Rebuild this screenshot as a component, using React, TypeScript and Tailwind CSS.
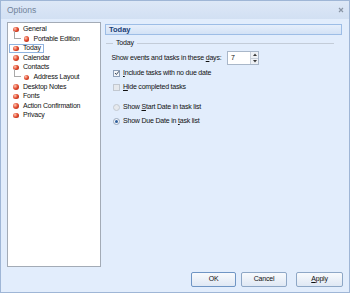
import React from "react";

const font = { fontFamily: '"Liberation Sans", Arial, sans-serif' } as React.CSSProperties;

function Bullet() {
  return (
    <span className="inline-block w-[5.5px] h-[5.5px] rounded-full bg-[radial-gradient(circle_at_35%_35%,#ffc8b4,#e0482c_50%,#a02614)] shrink-0" />
  );
}

type Item = { label: string; child?: boolean; selected?: boolean };
const items: Item[] = [
  { label: "General" },
  { label: "Portable Edition", child: true },
  { label: "Today", selected: true },
  { label: "Calendar" },
  { label: "Contacts" },
  { label: "Address Layout", child: true },
  { label: "Desktop Notes" },
  { label: "Fonts" },
  { label: "Action Confirmation" },
  { label: "Privacy" },
];

function TreeRow({ it }: { it: Item }) {
  if (it.child) {
    return (
      <div className="relative h-[9.6px] flex items-center pl-[15.5px]">
        <span className="absolute left-[6px] top-[-3px] w-[7px] h-[8px] border-l border-b border-[#a9a9a9]" />
        <Bullet />
        <span className="ml-[4.5px] whitespace-nowrap text-[#111]">{it.label}</span>
      </div>
    );
  }
  return (
    <div className="h-[9.6px] flex items-center pl-[1px]">
      <div
        className={
          "flex items-center h-[9.6px] pl-[3px] pr-[2px] border " +
          (it.selected ? "border-[#8fb3df] bg-white" : "border-transparent")
        }
      >
        <Bullet />
        <span className="ml-[4.5px] whitespace-nowrap text-[#111]">{it.label}</span>
      </div>
    </div>
  );
}

function Checkbox({ checked }: { checked?: boolean }) {
  return (
    <span
      className={
        "relative inline-flex w-[7px] h-[7px] border shrink-0 items-center justify-center " +
        (checked ? "border-[#8d9fb8] bg-[#f4f6f9]" : "border-[#c2c8d0] bg-[#e6e9ed]")
      }
    >
      {checked && (
        <svg width="6" height="6" viewBox="0 0 6 6" className="absolute">
          <path d="M1 3 L2.4 4.5 L5 1.2" fill="none" stroke="#3b4a5e" strokeWidth="1" />
        </svg>
      )}
    </span>
  );
}

function Radio({ checked }: { checked?: boolean }) {
  return (
    <span
      className={
        "relative inline-flex w-[7px] h-[7px] rounded-full border shrink-0 items-center justify-center " +
        (checked ? "border-[#9aa9bd] bg-[#f2f5f9]" : "border-[#c3c9d1] bg-[#e6e9ed]")
      }
    >
      {checked && <span className="w-[3px] h-[3px] rounded-full bg-[#2f5f9c]" />}
    </span>
  );
}

function Btn({ children, w, def }: { children: React.ReactNode; w: string; def?: boolean }) {
  return (
    <div
      className={
        "h-[15px] flex items-center justify-center rounded-[2px] border bg-gradient-to-b from-[#f8fafd] to-[#dfe8f4] text-[#111] " +
        w +
        (def ? " border-[#6f95c4]" : " border-[#8ea7c6]")
      }
    >
      {children}
    </div>
  );
}

export default function App() {
  return (
    <div
      style={font}
      className="w-[350px] h-[293px] flex flex-col border border-[#9fb6d6] bg-[#e2edfc] text-[7px] tracking-[-0.2px] text-[#111] overflow-hidden"
    >
      <div className="h-[18px] flex items-center justify-between pl-[6px] pr-[5px] bg-gradient-to-b from-[#dde8f7] to-[#d2e0f3]">
        <span className="text-[8.5px] tracking-normal text-[#72839a]">Options</span>
        <svg width="6" height="6" viewBox="0 0 6 6">
          <path d="M1 1 L5 5 M5 1 L1 5" stroke="#8a96a6" strokeWidth="1.2" />
        </svg>
      </div>

      <div className="mt-[3px] h-[245px] flex pl-[6px] pr-[7px]">
        <div className="w-[94px] h-full bg-white border border-[#a3abb6] pt-[1.5px]">
          {items.map((it) => (
            <TreeRow key={it.label} it={it} />
          ))}
        </div>

        <div className="flex-1 ml-[4px] flex flex-col">
          <div className="mt-[2px] h-[11px] flex items-center pl-[3px] border border-[#9dbde6] bg-gradient-to-b from-[#e6effb] to-[#d3e2f6]">
            <span className="text-[7.5px] font-bold tracking-normal text-[#1b3f78]">Today</span>
          </div>

          <div className="mt-[4px] h-[8px] flex items-center pr-[8px]">
            <span className="ml-[1px] w-[7px] h-px bg-[#c3ccd8]" />
            <span className="mx-[3px] text-[#111]">Today</span>
            <span className="flex-1 h-px bg-[#c3ccd8]" />
          </div>

          <div className="mt-[4px] h-[14px] flex items-center pl-[6.5px]">
            <span className="w-[115.5px] whitespace-nowrap">
              Show events and tasks in these <u>d</u>ays:
            </span>
            <div className="w-[32px] h-[14px] flex border border-[#a9b7c9] bg-white">
              <span className="flex-1 pl-[3px] flex items-center">7</span>
              <div className="w-[8px] flex flex-col border-l border-[#c7cfd9] bg-[#eef1f5]">
                <div className="flex-1 flex items-center justify-center border-b border-[#c7cfd9]">
                  <svg width="4" height="3" viewBox="0 0 4 3">
                    <path d="M0 3 L2 0.5 L4 3 Z" fill="#3a3a3a" />
                  </svg>
                </div>
                <div className="flex-1 flex items-center justify-center">
                  <svg width="4" height="3" viewBox="0 0 4 3">
                    <path d="M0 0 L2 2.5 L4 0 Z" fill="#3a3a3a" />
                  </svg>
                </div>
              </div>
            </div>
          </div>

          <div className="mt-[3px] h-[10px] flex items-center pl-[8px]">
            <Checkbox checked />
            <span className="ml-[3px] whitespace-nowrap">
              <u>I</u>nclude tasks with no due date
            </span>
          </div>

          <div className="mt-[4px] h-[10px] flex items-center pl-[8px]">
            <Checkbox />
            <span className="ml-[3px] whitespace-nowrap">
              <u>H</u>ide completed tasks
            </span>
          </div>

          <div className="mt-[10px] h-[10px] flex items-center pl-[8px]">
            <Radio />
            <span className="ml-[3px] whitespace-nowrap">
              Show <u>S</u>tart Date in task list
            </span>
          </div>

          <div className="mt-[4px] h-[10px] flex items-center pl-[8px]">
            <Radio checked />
            <span className="ml-[3px] whitespace-nowrap">
              Show Due Date in <u>t</u>ask list
            </span>
          </div>
        </div>
      </div>

      <div className="mt-[5px] flex justify-end pr-[6px]">
        <Btn w="w-[45px]" def>
          OK
        </Btn>
        <div className="w-[5px]" />
        <Btn w="w-[46px]">Cancel</Btn>
        <div className="w-[9px]" />
        <Btn w="w-[47px]">
          <span>
            <u>A</u>pply
          </span>
        </Btn>
      </div>
    </div>
  );
}
